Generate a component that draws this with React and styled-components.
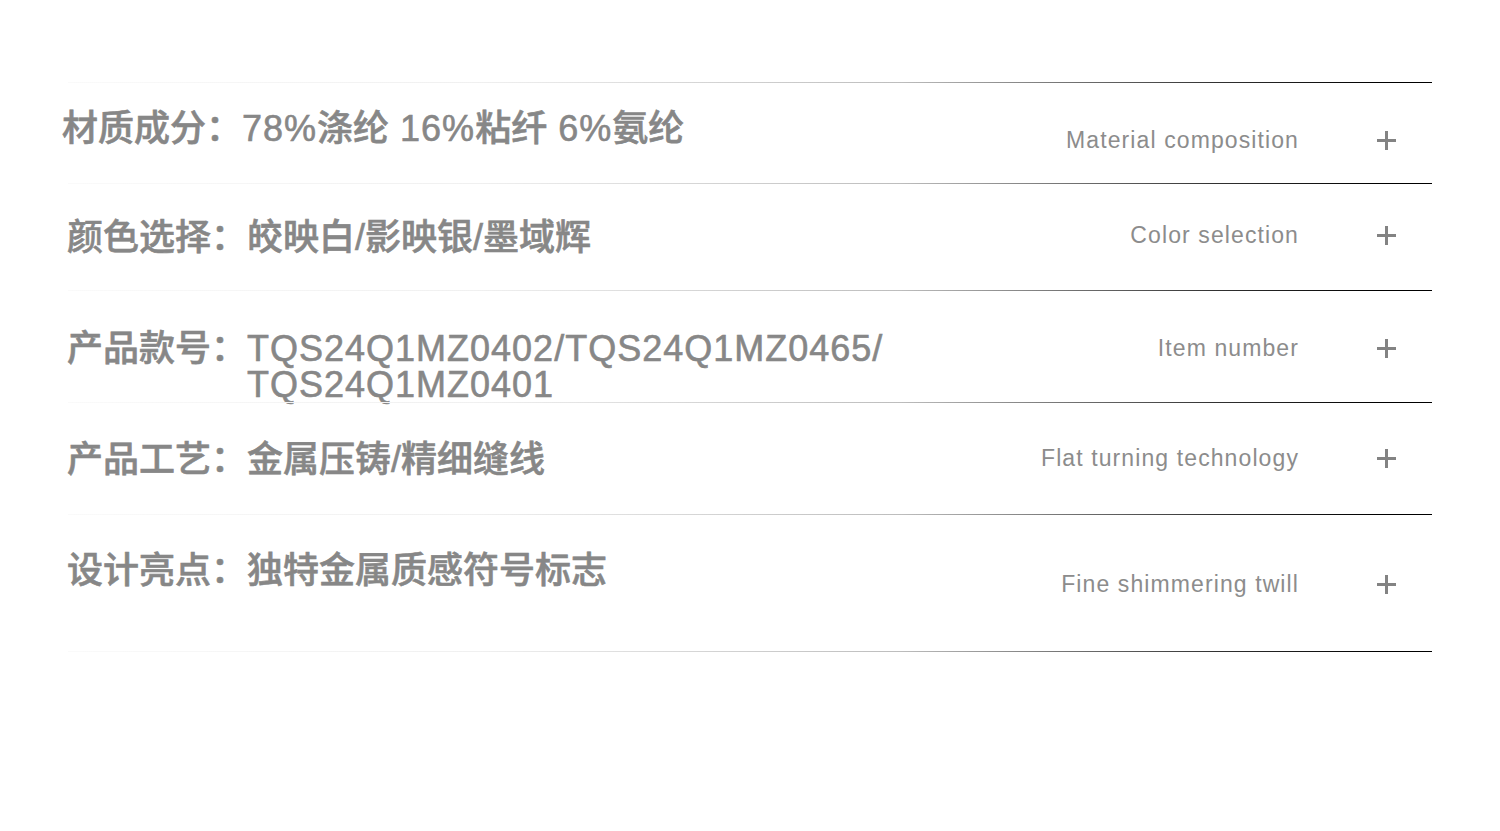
import React from "react";
import styled, { createGlobalStyle } from "styled-components";

const GlobalStyle = createGlobalStyle`
  html, body {
    margin: 0;
    padding: 0;
    background: #ffffff;
  }
  body {
    font-family: "Liberation Sans", "Noto Sans CJK SC", sans-serif;
  }
`;

const Page = styled.div`
  width: 1500px;
  height: 831px;
  padding: 82px 0 0 62px;
  box-sizing: border-box;
  background: #fff;
`;

const List = styled.div`
  width: 1370px;
  display: flex;
  flex-direction: column;
`;

const Divider = styled.div`
  height: 1px;
  margin-left: 6px;
  background: linear-gradient(
    to right,
    #fafafa 0%,
    #f0f0f0 30%,
    #bdbdbd 61%,
    #333333 84%,
    #000000 96%
  );
`;

const Row = styled.div`
  display: grid;
  grid-template-columns: 1fr auto 133px;
  align-items: start;
  height: ${(p) => p.$height}px;
`;

const Label = styled.div`
  display: flex;
  padding-top: ${(p) => p.$top - 18}px;
  padding-left: ${(p) => p.$indent}px;
  font-family: "Liberation Sans", "Noto Sans CJK SC", sans-serif;
  font-size: 36px;
  line-height: 36px;
  font-weight: 500;
  color: #878787;
  -webkit-text-stroke: 0.6px #878787;
  white-space: nowrap;
`;

const Key = styled.span`
  flex: none;
  width: 180px;
`;

const Value = styled.span`
  white-space: pre-line;
`;

const Latin = styled.span`
  letter-spacing: ${(p) => (p.$slash ? "0" : "1px")};
`;

const Side = styled.div`
  padding-top: ${(p) => p.$top - 14}px;
  font-family: "Liberation Sans", sans-serif;
  font-size: 23px;
  line-height: 28px;
  letter-spacing: 1.1px;
  color: #8c8c8c;
  text-align: right;
  white-space: nowrap;
`;

const PlusCell = styled.div`
  padding-top: ${(p) => p.$top - 9}px;
  padding-left: 78px;
`;

const Plus = styled.span`
  position: relative;
  display: block;
  width: 19px;
  height: 19px;

  &::before,
  &::after {
    content: "";
    position: absolute;
    background: #838383;
  }
  &::before {
    left: 0;
    right: 0;
    top: 8px;
    height: 3px;
  }
  &::after {
    top: 0;
    bottom: 0;
    left: 8px;
    width: 3px;
  }
`;

const rows = [
  {
    key: "材质成分：",
    value: "78%涤纶 16%粘纤 6%氨纶",
    side: "Material composition",
    height: 100,
    label: 46,
    right: 57,
    indent: 0,
  },
  {
    key: "颜色选择：",
    value: "皎映白/影映银/墨域辉",
    side: "Color selection",
    height: 106,
    label: 54,
    right: 51,
    indent: 5,
  },
  {
    key: "产品款号：",
    value: "TQS24Q1MZ0402/TQS24Q1MZ0465/\nTQS24Q1MZ0401",
    side: "Item number",
    height: 111,
    label: 58,
    right: 57,
    indent: 5,
  },
  {
    key: "产品工艺：",
    value: "金属压铸/精细缝线",
    side: "Flat turning technology",
    height: 111,
    label: 57,
    right: 55,
    indent: 5,
  },
  {
    key: "设计亮点：",
    value: "独特金属质感符号标志",
    side: "Fine shimmering twill",
    height: 136,
    label: 56,
    right: 69,
    indent: 5,
  },
];

// split a value into CJK and latin runs so the latin parts get their tracking
const renderValue = (text) =>
  text.split(/([\x00-\x7F]+)/).map((part, i) =>
    /^[\x00-\x7F]+$/.test(part) && part.trim() ? (
      <Latin key={i} $slash={part === "/"}>
        {part}
      </Latin>
    ) : (
      <React.Fragment key={i}>{part}</React.Fragment>
    )
  );

const App = () => {
  return (
    <Page>
      <GlobalStyle />
      <List>
        {rows.map((r) => (
          <React.Fragment key={r.key}>
            <Divider />
            <Row $height={r.height}>
              <Label $top={r.label} $indent={r.indent}>
                <Key>{r.key}</Key>
                <Value>{renderValue(r.value)}</Value>
              </Label>
              <Side $top={r.right}>{r.side}</Side>
              <PlusCell $top={r.right}>
                <Plus />
              </PlusCell>
            </Row>
          </React.Fragment>
        ))}
        <Divider />
      </List>
    </Page>
  );
};

export default App;
